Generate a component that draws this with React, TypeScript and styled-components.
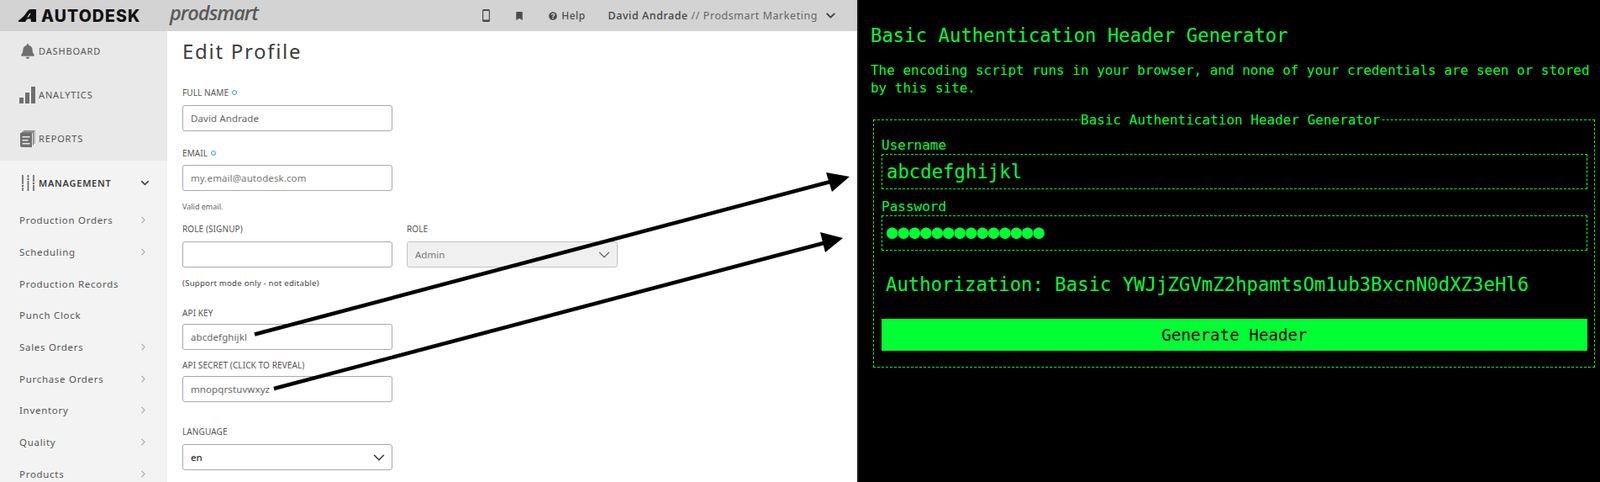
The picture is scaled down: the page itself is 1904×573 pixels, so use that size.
import React from 'react';
import styled, { createGlobalStyle } from 'styled-components';
import { FaBell, FaBookmark, FaQuestionCircle } from 'react-icons/fa';
import { LuChevronDown, LuChevronRight } from 'react-icons/lu';

const GREEN = '#00ff33';

const subItems = [
  { name: 'Production Orders', arrow: true },
  { name: 'Scheduling', arrow: true },
  { name: 'Production Records', arrow: false },
  { name: 'Punch Clock', arrow: false },
  { name: 'Sales Orders', arrow: true },
  { name: 'Purchase Orders', arrow: true },
  { name: 'Inventory', arrow: true },
  { name: 'Quality', arrow: true },
  { name: 'Products', arrow: true }
];

const AnalyticsIcon = () => (
  <svg width="19" height="20" viewBox="0 0 19 20" fill="#6f6f6f">
    <rect x="0" y="13" width="5" height="7" />
    <rect x="7" y="7" width="5" height="13" />
    <rect x="14" y="0" width="5" height="20" />
  </svg>
);

const ReportsIcon = () => (
  <svg width="18" height="20" viewBox="0 0 18 20">
    <path d="M4 0h13.5v16h-1V1.4H4z" fill="#8a8a8a" />
    <path d="M2 1.5h14v16h-1V3H2z" fill="#7d7d7d" />
    <path d="M0 3h14v17H1.5L0 18.5z" fill="#6f6f6f" />
    <path d="M2.5 7h9v1.6h-9zM2.5 11h7v1.6h-7zM2.5 15h9v1.6h-9z" fill="#e9e9e9" />
  </svg>
);

const SlidersIcon = () => (
  <svg width="17" height="19" viewBox="0 0 17 19" fill="none" stroke="#666" strokeWidth="1.6">
    <path d="M2 0v11M2 15v4M8.5 0v3M8.5 7v12M15 0v8M15 12v7" />
    <circle cx="2" cy="13" r="1.2" fill="#666" stroke="none" />
    <circle cx="8.5" cy="5" r="1.2" fill="#666" stroke="none" />
    <circle cx="15" cy="10" r="1.2" fill="#666" stroke="none" />
  </svg>
);

const PhoneIcon = () => (
  <svg width="9" height="15" viewBox="0 0 9 15">
    <path
      fillRule="evenodd"
      d="M1.5 0h6A1.5 1.5 0 0 1 9 1.5v12A1.5 1.5 0 0 1 7.5 15h-6A1.5 1.5 0 0 1 0 13.5v-12A1.5 1.5 0 0 1 1.5 0zM1.2 2v10.4h6.6V2z"
      fill="#4c4c4c"
    />
  </svg>
);

const AutodeskMark = () => (
  <svg width="21" height="15" viewBox="0 0 21 15" fill="#111">
    <path d="M0 15v-1.6C5 10.6 8.6 5.6 10.6 2.6 11.8.8 13 0 14.8 0H21v15h-6.2v-3.6h-4.4L8 15z" />
    <path d="M11.8 9.6l3-4.6h-1.6c-1 1.6-2 3.2-3 4.6z" fill="#d3d3d3" />
  </svg>
);

const Arrows = () => (
  <ArrowLayer viewBox="0 0 1904 573">
    <line x1="303" y1="397.5" x2="990" y2="215.5" stroke="#000" strokeWidth="4.5" />
    <polygon points="1011,210 983,205 990,228" fill="#000" />
    <line x1="326" y1="462" x2="982" y2="288.5" stroke="#000" strokeWidth="4.5" />
    <polygon points="1003,283 976,276 982,300" fill="#000" />
  </ArrowLayer>
);

const App = () => {
  return (
    <Page>
      <GlobalStyle />
      <LeftPanel>
        <TopBar>
          <Brand>
            <AutodeskMark />
            <BrandName>AUTODESK</BrandName>
          </Brand>
          <ProductName>prodsmart</ProductName>
          <TopActions>
            <TopIcon $width={39}>
              <PhoneIcon />
            </TopIcon>
            <TopIcon $width={40}>
              <FaBookmark size={10} />
            </TopIcon>
            <HelpLink>
              <FaQuestionCircle size={10} />
              Help
            </HelpLink>
            <Account>
              <b>David Andrade</b> // Prodsmart Marketing
            </Account>
            <LuChevronDown size={17} strokeWidth={2.8} color="#444" />
          </TopActions>
        </TopBar>

        <Body>
          <Sidebar>
            <MainNav>
              <MainItem>
                <IconSlot>
                  <FaBell size={18} color="#6f6f6f" />
                </IconSlot>
                DASHBOARD
              </MainItem>
              <MainItem>
                <IconSlot>
                  <AnalyticsIcon />
                </IconSlot>
                ANALYTICS
              </MainItem>
              <MainItem>
                <IconSlot>
                  <ReportsIcon />
                </IconSlot>
                REPORTS
              </MainItem>
            </MainNav>
            <SectionHead>
              <IconSlot>
                <SlidersIcon />
              </IconSlot>
              MANAGEMENT
              <LuChevronDown size={15} strokeWidth={2.6} color="#444" />
            </SectionHead>
            <SubNav>
              {subItems.map((item) => (
                <SubItem key={item.name}>
                  {item.name}
                  {item.arrow && <LuChevronRight size={13} color="#b0b0b0" strokeWidth={2.2} />}
                </SubItem>
              ))}
            </SubNav>
          </Sidebar>

          <Main>
            <Title>Edit Profile</Title>

            <FieldLabel>
              FULL NAME <Dot />
            </FieldLabel>
            <TextInput readOnly value="David Andrade" />

            <FieldLabel $top={19} $gap={7}>
              EMAIL <Dot />
            </FieldLabel>
            <TextInput readOnly placeholder="my.email@autodesk.com" />
            <Hint $top={12}>Valid email.</Hint>

            <RoleRow>
              <div>
                <FieldLabel $top={0}>ROLE (SIGNUP)</FieldLabel>
                <TextInput readOnly />
              </div>
              <div>
                <FieldLabel $top={0}>ROLE</FieldLabel>
                <SelectBox $disabled>
                  Admin
                  <LuChevronDown size={22} color="#666" strokeWidth={1.3} />
                </SelectBox>
              </div>
            </RoleRow>
            <Hint $top={12} $dark>
              (Support mode only - not editable)
            </Hint>

            <FieldLabel $top={21} $gap={6}>
              API KEY
            </FieldLabel>
            <TextInput readOnly value="abcdefghijkl" />
            <FieldLabel $top={11} $gap={6}>
              API SECRET (CLICK TO REVEAL)
            </FieldLabel>
            <TextInput readOnly value="mnopqrstuvwxyz" />

            <FieldLabel $top={28}>LANGUAGE</FieldLabel>
            <SelectBox>
              en
              <LuChevronDown size={22} color="#333" strokeWidth={1.6} />
            </SelectBox>
          </Main>
        </Body>
      </LeftPanel>

      <RightPanel>
        <TermTitle>Basic Authentication Header Generator</TermTitle>
        <TermIntro>
          The encoding script runs in your browser, and none of your credentials are seen or stored by this site.
        </TermIntro>
        <TermFieldset>
          <TermLegend>Basic Authentication Header Generator</TermLegend>
          <TermLabel>Username</TermLabel>
          <TermInput readOnly value="abcdefghijkl" />
          <TermLabel>Password</TermLabel>
          <TermInput readOnly $dots value="●●●●●●●●●●●●●●" />
          <TermResult>Authorization: Basic YWJjZGVmZ2hpamtsOm1ub3BxcnN0dXZ3eHl6</TermResult>
          <TermButton type="button">Generate Header</TermButton>
        </TermFieldset>
      </RightPanel>

      <Arrows />
    </Page>
  );
};

export default App;

const GlobalStyle = createGlobalStyle`
  html, body {
    margin: 0;
    height: 100%;
    overflow: hidden;
    background: #000;
  }

  * {
    box-sizing: border-box;
  }
`;

const Page = styled.div`
  position: relative;
  display: flex;
  width: 1904px;
  height: 573px;
  overflow: hidden;
  background: #000;
`;

const ArrowLayer = styled.svg`
  position: absolute;
  top: 0;
  left: 0;
  width: 1904px;
  height: 573px;
  pointer-events: none;
`;

const LeftPanel = styled.div`
  display: flex;
  flex-direction: column;
  width: 1020px;
  height: 573px;
  flex-shrink: 0;
  background: #fff;
  font-family: 'Noto Sans', sans-serif;
`;

const TopBar = styled.header`
  display: flex;
  align-items: center;
  height: 37px;
  flex-shrink: 0;
  padding-left: 22px;
  background: #d3d3d3;
`;

const Brand = styled.div`
  display: flex;
  align-items: center;
  gap: 6px;
  width: 180px;
  color: #111;
`;

const BrandName = styled.span`
  font-family: 'Inter', 'Liberation Sans', sans-serif;
  font-size: 19.5px;
  font-weight: 800;
  letter-spacing: 1.1px;
`;

const ProductName = styled.span`
  margin-top: -7px;
  font-family: 'Open Sans', sans-serif;
  font-size: 23.5px;
  line-height: 30px;
  font-style: italic;
  font-weight: 600;
  letter-spacing: -1px;
  color: #5a5a5a;
`;

const TopActions = styled.div`
  display: flex;
  align-items: center;
  margin-left: auto;
  padding-right: 23px;
  color: #4c4c4c;
`;

const TopIcon = styled.span<{ $width: number }>`
  display: flex;
  width: ${(p) => p.$width}px;
`;

const HelpLink = styled.span`
  display: flex;
  align-items: center;
  gap: 5px;
  margin-right: 27px;
  font-size: 12px;
  font-weight: 500;
  letter-spacing: 0.4px;
`;

const Account = styled.span`
  margin-right: 7px;
  font-size: 12.5px;
  letter-spacing: 0.55px;
  color: #666;

  b {
    font-weight: 500;
    color: #444;
  }
`;

const Body = styled.div`
  display: flex;
  flex: 1;
  min-height: 0;
`;

const Sidebar = styled.nav`
  width: 199px;
  flex-shrink: 0;
  background: #f3f3f3;
  overflow: hidden;
`;

const MainNav = styled.div`
  height: 154px;
  background: #e9e9e9;
`;

const IconSlot = styled.span`
  display: flex;
  justify-content: center;
  width: 19px;
  margin-right: 4px;
`;

const MainItem = styled.div`
  display: flex;
  align-items: center;
  height: 52px;
  padding: 0 0 5px 23px;
  font-size: 11px;
  letter-spacing: 0.85px;
  color: #555;
`;

const SectionHead = styled.div`
  display: flex;
  align-items: center;
  height: 52px;
  padding: 1px 19px 0 23px;
  font-size: 11px;
  font-weight: 600;
  letter-spacing: 0.75px;
  color: #3c3c3c;

  svg:last-child {
    margin-left: auto;
  }
`;

const SubNav = styled.div`
  display: flex;
  flex-direction: column;
`;

const SubItem = styled.div`
  display: flex;
  align-items: center;
  justify-content: space-between;
  height: 37.7px;
  padding: 0 22px 0 23px;
  font-size: 11.5px;
  letter-spacing: 0.7px;
  color: #555;
`;

const Main = styled.main`
  flex: 1;
  padding: 12px 0 0 18px;
  overflow: hidden;
`;

const Title = styled.h1`
  margin: 0 0 30px;
  font-size: 24px;
  line-height: 24px;
  font-weight: 400;
  letter-spacing: 1.7px;
  color: #3c3c3c;
`;

const FieldLabel = styled.label<{ $top?: number; $gap?: number }>`
  display: flex;
  align-items: center;
  gap: 4px;
  height: 14px;
  margin: ${(p) => p.$top ?? 0}px 0 ${(p) => p.$gap ?? 8}px;
  font-size: 10px;
  letter-spacing: 0.1px;
  color: #555;
`;

const Dot = styled.span`
  width: 6px;
  height: 6px;
  border: 1.5px solid #2a9fe0;
  border-radius: 50%;
`;

const TextInput = styled.input`
  display: block;
  width: 250px;
  height: 31px;
  padding: 0 9px 1px;
  border: 1px solid #a9a9ae;
  border-radius: 3px;
  background: #fff;
  outline: none;
  font-family: 'Noto Sans', sans-serif;
  font-size: 11.5px;
  letter-spacing: 0.1px;
  color: #666;

  &::placeholder {
    color: #777;
    opacity: 1;
  }
`;

const Hint = styled.p<{ $top: number; $dark?: boolean }>`
  margin: ${(p) => p.$top}px 0 0;
  font-size: ${(p) => (p.$dark ? 9.6 : 9)}px;
  line-height: 14px;
  letter-spacing: ${(p) => (p.$dark ? 0.25 : 0)}px;
  color: ${(p) => (p.$dark ? '#444' : '#666')};
`;

const RoleRow = styled.div`
  display: flex;
  gap: 17px;
  margin-top: 12px;
`;

const SelectBox = styled.div<{ $disabled?: boolean }>`
  display: flex;
  align-items: center;
  justify-content: space-between;
  width: ${(p) => (p.$disabled ? 251 : 250)}px;
  height: 31px;
  padding: 0 4px 0 9px;
  border: 1px solid ${(p) => (p.$disabled ? '#c4c4c4' : '#a9a9ae')};
  border-radius: 3px;
  background: ${(p) => (p.$disabled ? '#f0f0f0' : '#fff')};
  font-size: 11.5px;
  font-weight: ${(p) => (p.$disabled ? 400 : 500)};
  color: ${(p) => (p.$disabled ? '#777' : '#333')};
`;

const RightPanel = styled.section`
  flex: 1;
  min-width: 0;
  padding: 28px 8px 0 14px;
  border-left: 2px solid #1c1c1c;
  font-family: 'DejaVu Sans Mono', monospace;
  color: ${GREEN};
`;

const TermTitle = styled.h1`
  margin: 0 0 17px;
  font-size: 22.3px;
  line-height: 28px;
  font-weight: 400;
`;

const TermIntro = styled.p`
  margin: 0 0 17px;
  font-size: 16px;
  line-height: 21px;
  letter-spacing: -0.02px;
`;

const TermFieldset = styled.fieldset`
  display: flex;
  flex-direction: column;
  min-width: 0;
  margin: 0 -2px 0 3px;
  padding: 10px 8px 19px 9px;
  border: 1px dashed ${GREEN};
`;

const TermLegend = styled.legend`
  margin-left: 237px;
  padding: 0;
  font-size: 16px;
  line-height: 21px;
`;

const TermLabel = styled.label`
  font-size: 16px;
  line-height: 20px;
`;

const TermInput = styled.input<{ $dots?: boolean }>`
  width: 100%;
  height: 42px;
  margin-bottom: 11px;
  padding: 0 5px ${(p) => (p.$dots ? 4 : 0)}px;
  border: 1px dashed ${GREEN};
  background: #000;
  outline: none;
  font-family: 'DejaVu Sans Mono', monospace;
  font-size: 22.3px;
  color: ${GREEN};
`;

const TermResult = styled.p`
  margin: 15px 0 0;
  padding: 0 5px;
  font-size: 22.3px;
  line-height: 28px;
`;

const TermButton = styled.button`
  height: 38px;
  margin-top: 27px;
  border: none;
  background: ${GREEN};
  font-family: 'DejaVu Sans Mono', monospace;
  font-size: 19.2px;
  color: #000;
`;
